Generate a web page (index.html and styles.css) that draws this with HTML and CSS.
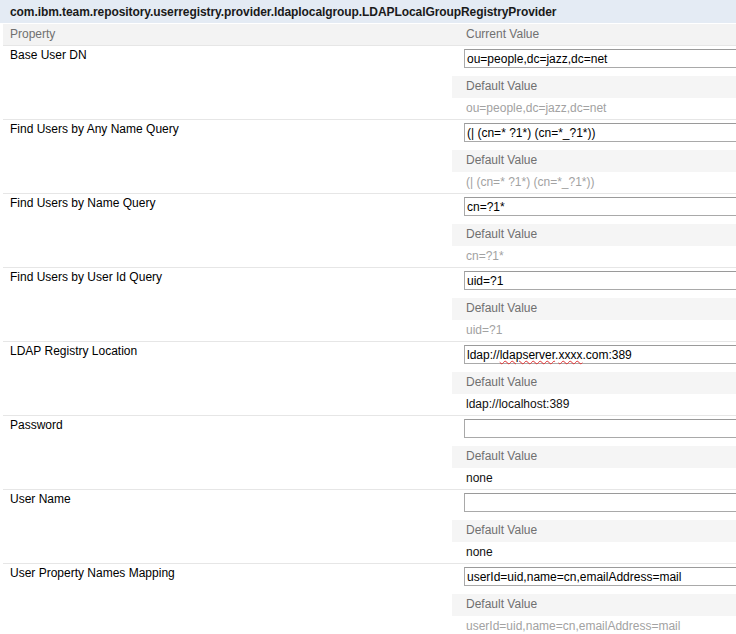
FILE: index.html
```html
<!DOCTYPE html>
<html>
<head>
<meta charset="utf-8">
<link rel="stylesheet" href="styles.css">
</head>
<body>
<div class="page">
  <div class="title">com.ibm.team.repository.userregistry.provider.ldaplocalgroup.LDAPLocalGroupRegistryProvider</div>
  <div class="grid">
    <div class="head">
      <div class="cell-name">Property</div>
      <div class="cell-value">Current Value</div>
    </div>

    <div class="row">
      <div class="cell-name">Base User DN</div>
      <div class="cell-value">
        <div class="field">ou=people,dc=jazz,dc=net</div>
        <div class="band">Default Value</div>
        <div class="default muted">ou=people,dc=jazz,dc=net</div>
      </div>
    </div>

    <div class="row">
      <div class="cell-name">Find Users by Any Name Query</div>
      <div class="cell-value">
        <div class="field">(| (cn=* ?1*) (cn=*_?1*))</div>
        <div class="band">Default Value</div>
        <div class="default muted">(| (cn=* ?1*) (cn=*_?1*))</div>
      </div>
    </div>

    <div class="row">
      <div class="cell-name">Find Users by Name Query</div>
      <div class="cell-value">
        <div class="field">cn=?1*</div>
        <div class="band">Default Value</div>
        <div class="default muted">cn=?1*</div>
      </div>
    </div>

    <div class="row">
      <div class="cell-name">Find Users by User Id Query</div>
      <div class="cell-value">
        <div class="field">uid=?1</div>
        <div class="band">Default Value</div>
        <div class="default muted">uid=?1</div>
      </div>
    </div>

    <div class="row">
      <div class="cell-name">LDAP Registry Location</div>
      <div class="cell-value">
        <div class="field">ldap://<span class="spell">ldapserver</span>.<span class="spell">xxxx</span>.com:389</div>
        <div class="band">Default Value</div>
        <div class="default">ldap://localhost:389</div>
      </div>
    </div>

    <div class="row">
      <div class="cell-name">Password</div>
      <div class="cell-value">
        <div class="field"></div>
        <div class="band">Default Value</div>
        <div class="default">none</div>
      </div>
    </div>

    <div class="row">
      <div class="cell-name">User Name</div>
      <div class="cell-value">
        <div class="field"></div>
        <div class="band">Default Value</div>
        <div class="default">none</div>
      </div>
    </div>

    <div class="row">
      <div class="cell-name">User Property Names Mapping</div>
      <div class="cell-value">
        <div class="field">userId=uid,name=cn,emailAddress=mail</div>
        <div class="band">Default Value</div>
        <div class="default muted">userId=uid,name=cn,emailAddress=mail</div>
      </div>
    </div>
  </div>
</div>
</body>
</html>
```

FILE: styles.css
```css
html, body {
  margin: 0;
  padding: 0;
  overflow: hidden;
  background: #ffffff;
}

body {
  font-family: Arial, "Liberation Sans", sans-serif;
  font-size: 12px;
  color: #000000;
}

.page {
  width: 100%;
}

.title {
  height: 23px;
  box-sizing: border-box;
  padding: 2px 0 0 10px;
  line-height: 21px;
  font-weight: bold;
  letter-spacing: -0.08px;
  white-space: nowrap;
  color: #1a1a1a;
  background: #e4ebf4;
  margin-bottom: 1px;
}

.grid {
  margin-left: 3px;
}

.head {
  display: grid;
  grid-template-columns: 449px 1fr;
  height: 21px;
  line-height: 21px;
  background: #f3f3f3;
  border-bottom: 1px solid #e6e6e6;
  color: #707070;
}

.head .cell-name {
  padding-left: 7px;
}

.head .cell-value {
  padding-left: 14px;
}

.row {
  display: grid;
  grid-template-columns: 449px 1fr;
  height: 74px;
  box-sizing: border-box;
  border-bottom: 1px solid #e6e6e6;
}

.row .cell-name {
  padding: 2px 0 0 7px;
  line-height: 14px;
}

.row .cell-value {
  display: flex;
  flex-direction: column;
  min-width: 0;
}

.field {
  margin: 3px 0 0 12px;
  height: 19px;
  box-sizing: border-box;
  border: 1px solid #a9a9a9;
  border-top-color: #9a9a9a;
  border-right: none;
  padding: 1px 2px 0;
  line-height: 16px;
  white-space: nowrap;
  background: #ffffff;
}

.spell {
  text-decoration: underline wavy #e03030;
  text-decoration-thickness: 1px;
  text-underline-offset: 1px;
}

.band {
  margin-top: 8px;
  height: 22px;
  line-height: 20px;
  padding-left: 14px;
  background: #f5f5f5;
  color: #707070;
}

.default {
  padding: 1px 0 0 14px;
  line-height: 18px;
  color: #111111;
}

.default.muted {
  color: #a2a2a2;
}
```
